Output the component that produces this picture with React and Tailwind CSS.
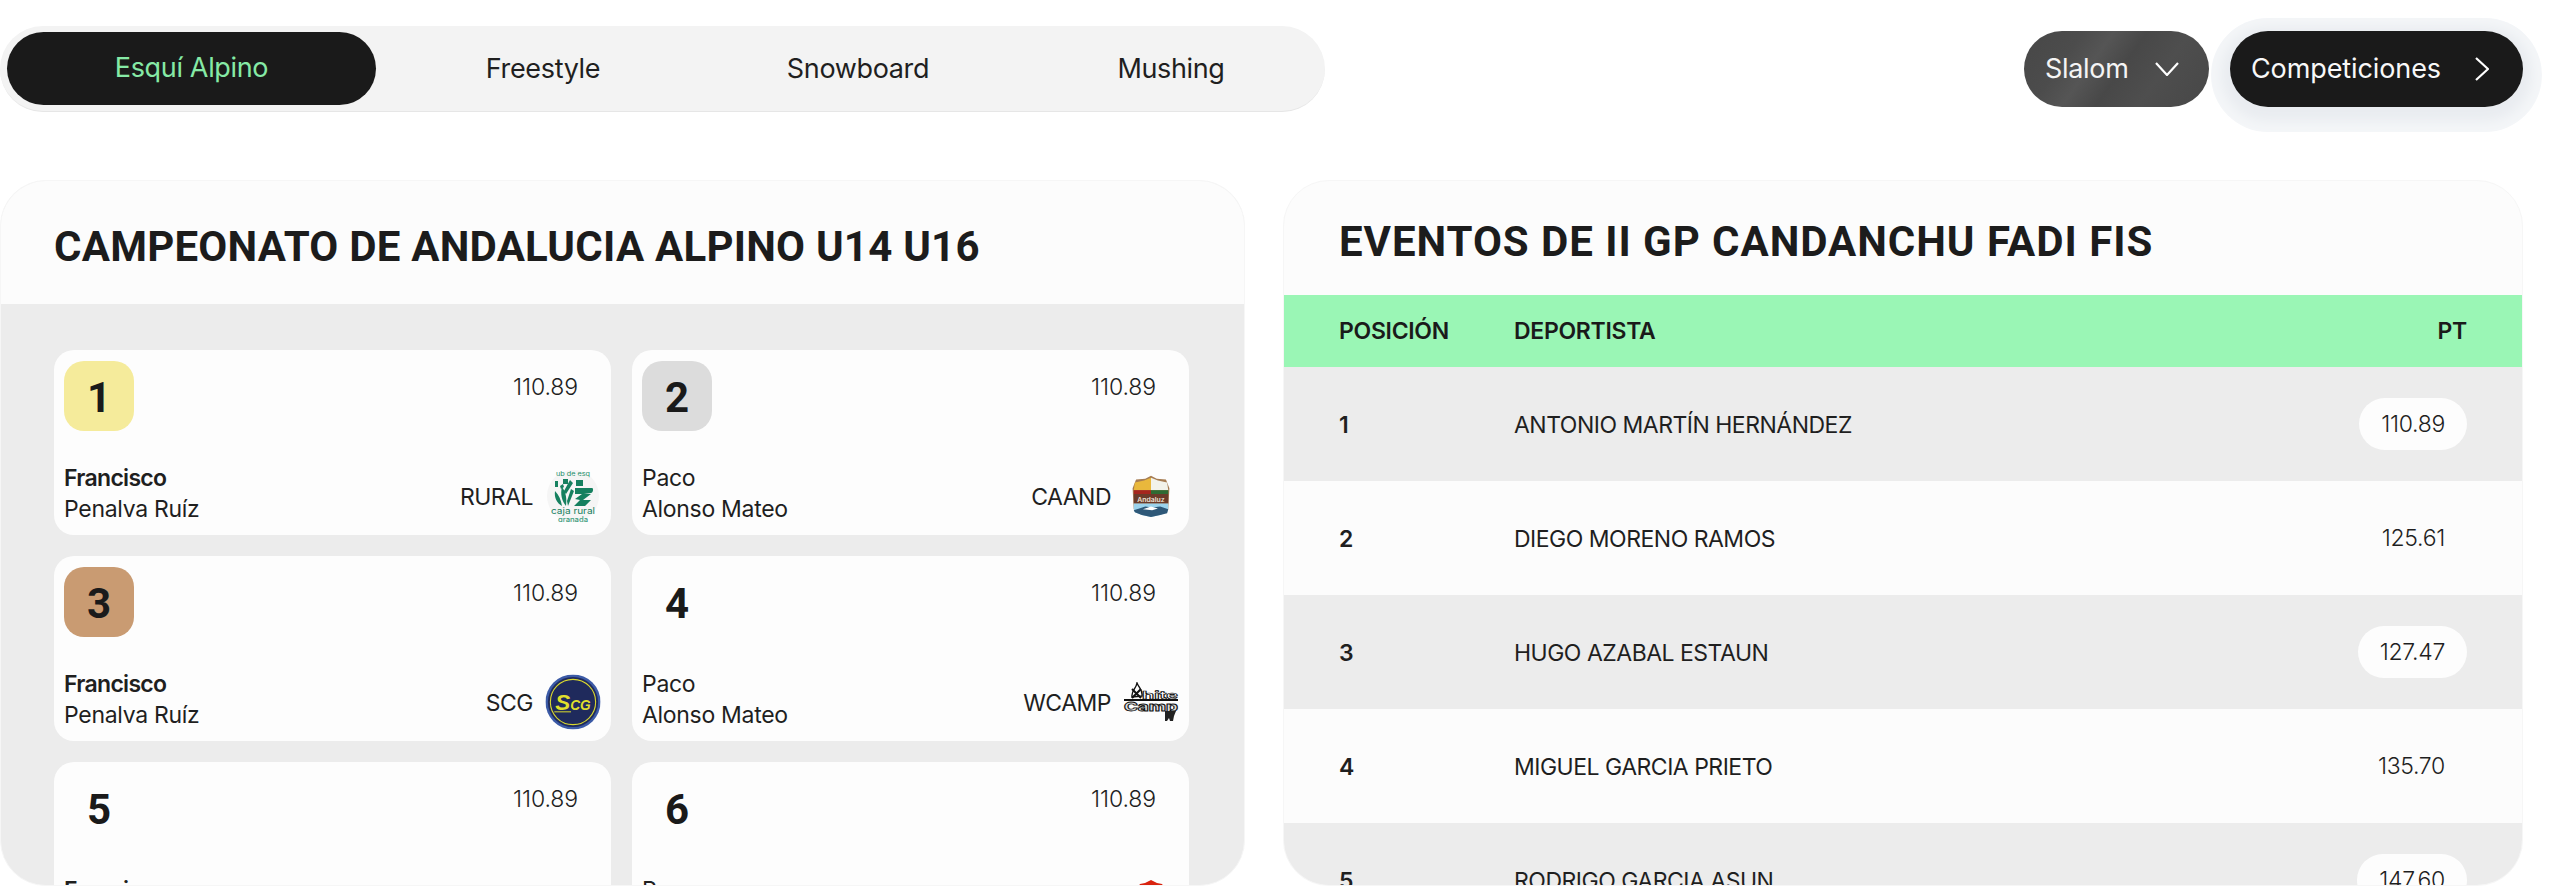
const sans = "font-['Inter','Liberation_Sans',sans-serif]";

function RuralLogo() {
  return (
    <svg viewBox="0 0 52 52" className="w-[52px] h-[52px] shrink-0">
      <circle cx="26" cy="26" r="26" fill="#f5f5f5" />
      <text x="26" y="6" textAnchor="middle" fontSize="6" fill="#1f8f6b" fontFamily="Inter" textLength="34" lengthAdjust="spacingAndGlyphs">ub de esq</text>
      <g fill="#15805f">
        <path d="M16 9h5v5h-5zM8 11h3v6H8zM13 16l3-2 1 3-3 2zM29 10h7v6h-7z" />
        <path d="M8 21c4 4 6 9 7 15-5-3-8-8-7-15zM15 17c4 5 5 12 4 19-4-5-6-12-4-19zM23 10l3 3-7 11-2-3zM24 19l3 2-6 15-1-5z" />
        <path d="M28 18h17c2 0 1 5-1 5h-7l7 1-8 6h8l-6 6H27l6-6-5-1 7-5h-7z" />
      </g>
      <text x="26" y="44" textAnchor="middle" fontSize="9" fill="#15805f" fontFamily="Inter" textLength="44" lengthAdjust="spacingAndGlyphs">caja rural</text>
      <text x="26" y="52" textAnchor="middle" fontSize="7" fontWeight="500" fill="#3c9b7d" fontFamily="Inter" textLength="30" lengthAdjust="spacingAndGlyphs">granada</text>
    </svg>
  );
}

function CaandLogo() {
  return (
    <svg viewBox="0 0 52 52" className="w-[52px] h-[52px] shrink-0">
      <g transform="translate(26 0) scale(1.15 0.96) translate(-26 1)">
        <path d="M26 5l5 3 8 1 3 9-1 22-6 5-9 2-9-2-6-5-1-22 3-9 8-1z" fill="#a67c52" />
        <path d="M12 12l8-2 6-3 0 13H11z" fill="#e9b83c" />
        <path d="M26 7l6 3 8 2 1 8H26z" fill="#f2f2ea" />
        <path d="M11 20h15v4H11z" fill="#a5261e" />
        <path d="M26 20h15v4H26z" fill="#2f6b33" />
        <path d="M11 24h30v10H11z" fill="#6b3b2a" />
        <text x="26" y="32" textAnchor="middle" fontSize="6" fontWeight="600" fill="#f0e6d8" fontFamily="Inter">Andaluz</text>
        <path d="M11 34h30v5l-1 4-6 3-8 2-8-2-6-3-1-4z" fill="#9bd3ec" />
        <path d="M11 41l10-4 6 1 7-1 7 3-1 4-6 2-8 2-8-2-6-3z" fill="#2e5878" />
        <path d="M19 40l7-3 6 2-5 2z" fill="#ffffff" />
      </g>
    </svg>
  );
}

function ScgLogo() {
  return (
    <svg viewBox="0 0 56 56" className="w-[52px] h-[52px] shrink-0 scale-[1.06]">
      <circle cx="28" cy="28" r="28" fill="#3b5aa6" />
      <circle cx="28" cy="28" r="25.5" fill="#1f2a5c" />
      <circle cx="28" cy="28" r="23" fill="none" stroke="#d9d82e" strokeWidth="1.1" />
      <text x="10" y="36" fontWeight="700" fontStyle="italic" fill="#e0df2c" fontFamily="Liberation Sans" textLength="36" lengthAdjust="spacingAndGlyphs">
        <tspan fontSize="23">S</tspan><tspan fontSize="14">CG</tspan>
      </text>
      <path d="M9 38h17" stroke="#e0df2c" strokeWidth="1" />
    </svg>
  );
}

function WcampLogo() {
  return (
    <svg viewBox="0 0 56 40" className="w-[56px] h-[40px] shrink-0 -mx-[2px]">
      <path d="M14 1c2 5 6 7 5 13l-10 1C8 9 13 7 14 1z" fill="none" stroke="#111" strokeWidth="1.4" />
      <path d="M9 7l9 9M18 7l-9 9" stroke="#111" strokeWidth="2" />
      <text x="19" y="17" fontSize="11" fontWeight="700" fill="#fff" stroke="#111" strokeWidth="0.7" fontFamily="Inter" textLength="36" lengthAdjust="spacingAndGlyphs">hite</text>
      <rect x="1" y="17" width="54" height="2" fill="#111" />
      <text x="1" y="29" fontSize="12" fontWeight="800" fill="#ddd" stroke="#111" strokeWidth="0.8" fontFamily="Inter" textLength="54" lengthAdjust="spacingAndGlyphs">Camp</text>
      <path d="M42 29h11l-2 5-1 5h-3l-1-3-2 3h-2z" fill="#222" />
    </svg>
  );
}

function RedLogo() {
  return (
    <svg viewBox="0 0 52 52" className="w-[52px] h-[52px] shrink-0 -translate-y-[2px]">
      <path d="M26 0l6 3 5 1 2 3 5 5v28l-6 5-7 4-5 3-5-3-7-4-6-5V12l5-5 2-3 5-1z" fill="#d9230f" />
    </svg>
  );
}

const cards = [
  { r: "1", bg: "bg-[#f5eb9b]", a: "Francisco", b: "Penalva Ruíz", c: "RURAL", L: RuralLogo, m: true },
  { r: "2", bg: "bg-[#dcdcdc]", a: "Paco", b: "Alonso Mateo", c: "CAAND", L: CaandLogo },
  { r: "3", bg: "bg-[#c99b72]", a: "Francisco", b: "Penalva Ruíz", c: "SCG", L: ScgLogo, m: true },
  { r: "4", bg: "", a: "Paco", b: "Alonso Mateo", c: "WCAMP", L: WcampLogo },
  { r: "5", bg: "", a: "Francisco", b: "Penalva Ruíz", c: "", L: null, m: true },
  { r: "6", bg: "", a: "Paco", b: "Alonso Mateo", c: "", L: RedLogo },
];

const rows = [
  ["1", "ANTONIO MARTÍN HERNÁNDEZ", "110.89"],
  ["2", "DIEGO MORENO RAMOS", "125.61"],
  ["3", "HUGO AZABAL ESTAUN", "127.47"],
  ["4", "MIGUEL GARCIA PRIETO", "135.70"],
  ["5", "RODRIGO GARCIA ASUN", "147.60"],
];

function Card({ r, bg, a, b, c, L, m }) {
  return (
    <div className="h-[185px] shrink-0 bg-[#fdfdfd] rounded-[20px] pl-[10px] pr-[12px] pt-[11px] pb-[12px] flex flex-col justify-between">
      <div className="flex justify-between items-start">
        <div className={`w-[70px] h-[70px] rounded-[20px] flex items-center justify-center pt-[2px] text-[42px] font-bold text-[#1a1a1a] font-['Roboto',sans-serif] ${bg}`}>{r}</div>
        <div className="text-[23px] leading-[32px] font-light tracking-[-0.1px] text-[#1f1f1f] mr-[21px] mt-[10px]">110.89</div>
      </div>
      <div className="flex justify-between items-end">
        <div className="text-[23px] leading-[31px] tracking-[-0.3px] text-[#1f1f1f] translate-y-[2px]">
          <div className={m ? "font-semibold tracking-[-0.7px]" : ""}>{a}</div>
          <div>{b}</div>
        </div>
        <div className="flex items-center gap-[14px] h-[52px] mb-[1px]">
          <span className="text-[23px] tracking-[-0.5px] text-[#1f1f1f] pt-[2px]">{c}</span>
          {L ? <L /> : null}
        </div>
      </div>
    </div>
  );
}

export default function App() {
  return (
    <div className={`w-[2560px] h-[886px] overflow-hidden bg-white pr-[37px] flex flex-col ${sans}`}>
      <header className="h-[138px] shrink-0 flex items-center justify-between">
        <nav className="w-[1325px] h-[86px] bg-[#f3f3f3] border-b border-[#e6e6e6] rounded-[43px] flex items-center pl-[7px] text-[27px] tracking-[-0.35px] text-[#1f1f1f]">
          <div className="w-[369px] h-[73px] rounded-[37px] bg-[#1a1a1a] text-[#86eaa6] flex items-center justify-center">Esquí Alpino</div>
          <div className="ml-[16px] w-[302px] text-center pt-[1px]">Freestyle</div>
          <div className="w-[328px] text-center pt-[1px]">Snowboard</div>
          <div className="w-[298px] text-center pt-[1px]">Mushing</div>
        </nav>
        <div className="flex items-center gap-[21px]">
          <button className="w-[185px] h-[76px] rounded-[38px] bg-[#4b4b4b] bg-[linear-gradient(125deg,#474747_0%,#4c4c4c_25%,#555555_38%,#484848_52%,#4e4e4e_70%,#474747_100%)] text-[#f4f4f4] text-[27px] tracking-[-0.3px] flex items-center pl-[21px]">
            Slalom
            <svg viewBox="0 0 24 14" className="w-[24px] h-[14px] ml-[26px]" fill="none" stroke="#fff" strokeWidth="2.2"><path d="M1 1l11 12L23 1" /></svg>
          </button>
          <button className="w-[293px] h-[76px] rounded-[38px] bg-[#1a1a1a] text-[#f8f8f8] text-[27px] tracking-[-0.1px] flex items-center pl-[21px] shadow-[0_5px_12px_9px_#e9ecf0,0_6px_0_19px_#f4f6f8]">
            Competiciones
            <svg viewBox="0 0 14 24" className="w-[14px] h-[24px] ml-auto mr-[34px]" fill="none" stroke="#fff" strokeWidth="2.2"><path d="M1 1l12 11L1 23" /></svg>
          </button>
        </div>
      </header>

      <main className="mt-[42px] flex-1 min-h-0 flex gap-[38px]">
        <section className="w-[1245px] shrink-0 rounded-[46px] overflow-hidden border border-[#f6f6f6] bg-[#ececec] flex flex-col">
          <div className="h-[123px] shrink-0 bg-[#fcfcfc] flex items-center pl-[53px] pt-[8px]">
            <h2 className="font-['Roboto',sans-serif] font-bold text-[42px] tracking-[0.23px] text-[#1c1c1c]">CAMPEONATO DE ANDALUCIA ALPINO U14 U16</h2>
          </div>
          <div className="flex-1 min-h-0 overflow-hidden pt-[46px] pl-[53px] pr-[55px] grid grid-cols-2 gap-x-[21px] gap-y-[21px] content-start">
            {cards.map((c) => <Card key={c.r} {...c} />)}
          </div>
        </section>

        <section className="flex-1 min-w-0 rounded-[46px] overflow-hidden border border-[#f6f6f6] bg-[#fcfcfc] flex flex-col">
          <div className="h-[114px] shrink-0 flex items-center pl-[55px] pt-[6px]">
            <h2 className="font-['Roboto',sans-serif] font-bold text-[42px] tracking-[0.95px] text-[#1c1c1c]">EVENTOS DE II GP CANDANCHU FADI FIS</h2>
          </div>
          <div className="h-[72px] shrink-0 bg-[#9af6b5] grid grid-cols-[175px_1fr_auto] items-center pl-[55px] pr-[55px] text-[23px] font-semibold tracking-[-0.3px] text-[#1a1a1a]">
            <div>POSICIÓN</div>
            <div>DEPORTISTA</div>
            <div>PT</div>
          </div>
          {rows.map((row, i) => (
            <div key={row[0]} className={`h-[114px] shrink-0 grid grid-cols-[175px_1fr_auto] items-center pl-[55px] pr-[55px] text-[23px] tracking-[-0.5px] text-[#1f1f1f] ${i % 2 === 0 ? "bg-[#ececec]" : "bg-[#fcfcfc]"}`}>
              <div className="font-semibold pt-[2px]">{row[0]}</div>
              <div className="pt-[2px]">{row[1]}</div>
              <div className={`h-[52px] rounded-[26px] px-[22px] pt-[1px] flex items-center font-light tracking-[-0.3px] ${i % 2 === 0 ? "bg-[#fdfdfd]" : ""}`}>{row[2]}</div>
            </div>
          ))}
        </section>
      </main>
    </div>
  );
}
